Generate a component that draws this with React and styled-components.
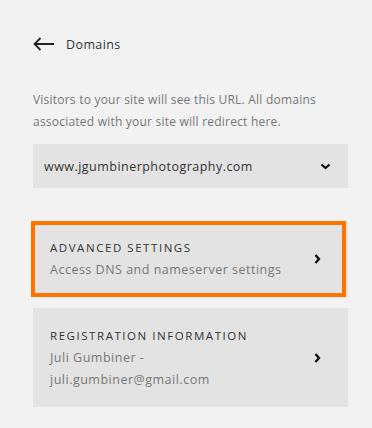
import React from "react";
import styled, { createGlobalStyle } from "styled-components";

const Global = createGlobalStyle`
  html, body { margin: 0; padding: 0; background: #f2f2f2; }
  body { font-family: "Open Sans", "Liberation Sans", sans-serif; -webkit-font-smoothing: antialiased; }
`;

const Page = styled.div`
  width: 372px;
  height: 428px;
  box-sizing: border-box;
  padding: 33px 24px 0 33px;
  background: #f2f2f2;
  display: flex;
  flex-direction: column;
`;

const Header = styled.div`
  display: flex;
  align-items: center;
  height: 22px;
  gap: 12px;
`;

const HeaderTitle = styled.span`
  font-size: 12.5px;
  letter-spacing: 0.4px;
  color: #333;
`;

const Intro = styled.p`
  margin: 34px 0 0;
  font-size: 12px;
  letter-spacing: 0.22px;
  line-height: 22px;
  color: #777;
`;

const Select = styled.div`
  margin-top: 11px;
  height: 44px;
  background: #e3e3e3;
  display: flex;
  align-items: center;
  justify-content: space-between;
  padding: 0 17px 0 11px;
  font-size: 12.5px;
  letter-spacing: 0.47px;
  color: #333;
`;

const Card = styled.div`
  position: relative;
  margin-top: ${(p) => p.$mt}px;
  background: #e3e3e3;
  display: flex;
  align-items: center;
  justify-content: space-between;
  padding: ${(p) => p.$py}px 27px ${(p) => p.$py}px 17px;
`;

const Highlight = styled.div`
  position: absolute;
  left: -2px;
  top: 0;
  bottom: 0;
  width: 315px;
  box-sizing: border-box;
  border: 4px solid #ff7300;
  pointer-events: none;
`;

const CardText = styled.div`
  display: flex;
  flex-direction: column;
`;

const CardTitle = styled.div`
  font-size: 11.5px;
  letter-spacing: 1.55px;
  color: #333;
  line-height: 22px;
`;

const CardLine = styled.div`
  font-size: 12.5px;
  letter-spacing: 0.5px;
  color: #777;
  line-height: 22px;
`;

const ChevronDown = () => (
  <svg width="11" height="7" viewBox="0 0 11 7">
    <path d="M1.5 1.5 L5.5 5 L9.5 1.5" fill="none" stroke="#111" strokeWidth="2.3" />
  </svg>
);

const ChevronRight = () => (
  <svg width="7" height="10" viewBox="0 0 7 10">
    <path d="M1.5 1 L5 5 L1.5 9" fill="none" stroke="#111" strokeWidth="2.3" />
  </svg>
);

const BackArrow = () => (
  <svg width="21" height="14" viewBox="0 0 21 14">
    <path d="M21 7 H1.5 M7.5 1 L1.5 7 L7.5 13" fill="none" stroke="#222" strokeWidth="1.8" />
  </svg>
);

export default function App() {
  return (
    <>
      <Global />
      <Page>
        <Header>
          <BackArrow />
          <HeaderTitle>Domains</HeaderTitle>
        </Header>
        <Intro>
          Visitors to your site will see this URL. All domains associated with your site will redirect here.
        </Intro>
        <Select>
          <span>www.jgumbinerphotography.com</span>
          <ChevronDown />
        </Select>
        <Card $mt={33} $py={16}>
          <CardText>
            <CardTitle>ADVANCED SETTINGS</CardTitle>
            <CardLine>Access DNS and nameserver settings</CardLine>
          </CardText>
          <ChevronRight />
          <Highlight />
        </Card>
        <Card $mt={11} $py={16.5}>
          <CardText>
            <CardTitle>REGISTRATION INFORMATION</CardTitle>
            <CardLine>Juli Gumbiner -</CardLine>
            <CardLine>juli.gumbiner@gmail.com</CardLine>
          </CardText>
          <ChevronRight />
        </Card>
      </Page>
    </>
  );
}
